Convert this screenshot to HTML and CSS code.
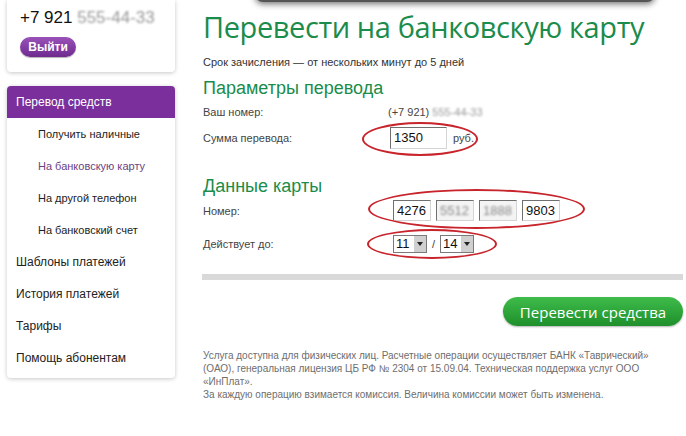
FILE: index.html
```html
<!DOCTYPE html>
<html lang="ru">
<head>
<meta charset="utf-8">
<title>Перевести на банковскую карту</title>
<link rel="stylesheet" href="styles.css">
</head>
<body>
<div class="topbar"></div>
<div class="page">
  <aside class="side">
    <div class="card user">
      <div class="phone">+7 921 <span class="blur">555-44-33</span></div>
      <button class="logout">Выйти</button>
    </div>
    <nav class="card menu">
      <div class="menu-head">Перевод средств</div>
      <a class="sub">Получить наличные</a>
      <a class="sub active">На банковскую карту</a>
      <a class="sub">На другой телефон</a>
      <a class="sub">На банковский счет</a>
      <a class="main-item">Шаблоны платежей</a>
      <a class="main-item">История платежей</a>
      <a class="main-item">Тарифы</a>
      <a class="main-item">Помощь абонентам</a>
    </nav>
  </aside>
  <main class="content">
    <h1 class="title">Перевести на банковскую карту</h1>
    <p class="lead">Срок зачисления — от нескольких минут до 5 дней</p>

    <h2 class="section">Параметры перевода</h2>
    <div class="row r-phone">
      <div class="label">Ваш номер:</div>
      <div class="value">(+7 921) <span class="blur">555-44-33</span></div>
    </div>
    <div class="row r-sum">
      <div class="label">Сумма перевода:</div>
      <div class="value field">
        <span class="ring ring-sum"></span>
        <span class="input w-sum">1350</span>
        <span class="unit">руб.</span>
      </div>
    </div>

    <h2 class="section s-card">Данные карты</h2>
    <div class="row r-card">
      <div class="label">Номер:</div>
      <div class="value field cards">
        <span class="ring ring-card"></span>
        <span class="input w-card">4276</span>
        <span class="input w-card masked"><span class="blur">5512</span></span>
        <span class="input w-card masked"><span class="blur">1888</span></span>
        <span class="input w-card">9803</span>
      </div>
    </div>
    <div class="row r-date">
      <div class="label">Действует до:</div>
      <div class="value field dates">
        <span class="ring ring-date"></span>
        <span class="select"><span class="sel-val">11</span><span class="arrow"></span></span>
        <span class="slash">/</span>
        <span class="select"><span class="sel-val">14</span><span class="arrow"></span></span>
      </div>
    </div>

    <div class="divider"></div>
    <div class="actions">
      <button class="submit">Перевести средства</button>
    </div>

    <div class="note">
      <p>Услуга доступна для физических лиц. Расчетные операции осуществляет БАНК «Таврический»<br>(ОАО), генеральная лицензия ЦБ РФ № 2304 от 15.09.04. Техническая поддержка услуг ООО<br>«ИнПлат».</p>
      <p>За каждую операцию взимается комиссия. Величина комиссии может быть изменена.</p>
    </div>
  </main>
</div>
</body>
</html>
```
FILE: styles.css
```css
* { box-sizing: border-box; }
html, body { margin: 0; padding: 0; background: #fff; }
body {
  font-family: "Liberation Sans", Arial, sans-serif;
  color: #333;
  width: 686px;
  height: 436px;
  overflow: hidden;
  position: relative;
}
.topbar {
  position: absolute;
  left: 255px;
  top: -30px;
  width: 400px;
  height: 32px;
  background: #555;
  border-radius: 0 0 8px 8px;
  box-shadow: 0 2px 6px rgba(0,0,0,0.55);
}
.page {
  display: flex;
  padding-left: 7px;
}
.side {
  width: 168px;
  flex: none;
  display: flex;
  flex-direction: column;
  gap: 14px;
}
.card {
  background: #fff;
  border-radius: 4px;
  box-shadow: 0 1px 4px rgba(0,0,0,0.22);
}
.user {
  height: 72px;
  padding: 9px 0 0 13px;
  border-radius: 0 0 4px 4px;
}
.phone {
  font-size: 17px;
  color: #111;
  line-height: 18px;
}
.blur {
  color: #999;
  filter: blur(1.2px);
}
.logout {
  margin-top: 10px;
  width: 56px;
  height: 20px;
  border: none;
  border-radius: 10px;
  background: linear-gradient(#9a52b8, #6e2b8e);
  color: #fff;
  font-family: "Liberation Sans", Arial, sans-serif;
  font-weight: bold;
  font-size: 12px;
  padding: 0;
  box-shadow: 0 1px 1px rgba(0,0,0,0.3);
}
.menu {
  display: flex;
  flex-direction: column;
  padding-bottom: 4px;
  height: 292px;
}
.menu-head {
  height: 32px;
  background: #7b2f9c;
  color: #fff;
  font-size: 12px;
  line-height: 32px;
  padding-left: 9px;
  border-radius: 4px 4px 0 0;
}
.menu a {
  display: block;
  height: 32.2px;
  line-height: 32px;
  color: #222;
}
.sub { font-size: 11px; padding-left: 31px; }
.sub.active { color: #6b3f82; }
.main-item { font-size: 12px; padding-left: 9px; }

.content {
  margin-left: 28px;
  width: 480px;
  flex: none;
}
.title {
  margin: 9px 0 0;
  font-family: "Open Sans", sans-serif;
  font-weight: normal;
  font-size: 29px;
  line-height: 36px;
  color: #1b8c4b;
  letter-spacing: -0.4px;
}
.lead {
  margin: 10px 0 0;
  font-size: 11px;
  line-height: 14px;
  color: #333;
}
.section {
  margin: 9px 0 0;
  font-weight: normal;
  font-size: 18px;
  line-height: 20px;
  color: #1b8c4b;
}
.s-card { margin-top: 27px; }
.row {
  display: grid;
  grid-template-columns: 185px auto;
  align-items: center;
  font-size: 11px;
  color: #444;
}
.r-phone { margin-top: 7px; height: 14px; }
.r-sum { margin-top: 8px; }
.r-card { margin-top: 4px; }
.r-date { margin-top: 14px; }
.field {
  position: relative;
  display: flex;
  align-items: center;
}
.ring {
  position: absolute;
  border: 2px solid #c8242c;
  border-radius: 50%;
}
.ring-sum { left: -26px; top: -5px; width: 116px; height: 34px; }
.ring-card { left: -20px; top: -11px; width: 217px; height: 40px; }
.ring-date { left: -21px; top: -6px; width: 130px; height: 30px; }
.input {
  display: inline-block;
  background: #fff;
  border-top: 1px solid #707070;
  border-left: 1px solid #707070;
  border-right: 1px solid #d4d4d4;
  border-bottom: 1px solid #d4d4d4;
  font-size: 13px;
  color: #111;
  line-height: 20px;
  padding-left: 3px;
}
.w-sum { width: 57px; height: 22px; margin-left: 2px; }
.unit { margin-left: 6px; font-size: 11px; color: #444; }
.cards { gap: 5px; padding-left: 5px; }
.w-card { width: 38px; height: 21px; line-height: 19px; }
.masked { background: #f4f4f4; }
.masked .blur { color: #888; }
.dates { padding-left: 5px; }
.select {
  display: inline-flex;
  width: 34px;
  height: 18px;
  border: 1px solid #7a7a7a;
  background: #fff;
  font-size: 13px;
  color: #111;
  line-height: 16px;
}
.sel-val { flex: 1; padding-left: 2px; }
.arrow {
  width: 13px;
  height: 16px;
  background: #d0d0d0;
  border-left: 1px solid #fff;
  position: relative;
}
.arrow::after {
  content: "";
  position: absolute;
  left: 3px;
  top: 6px;
  border-left: 3.5px solid transparent;
  border-right: 3.5px solid transparent;
  border-top: 4px solid #222;
}
.slash { margin: 0 5px 0 5px; font-size: 11px; color: #444; }
.divider {
  margin-top: 21px;
  margin-left: -1px;
  height: 6px;
  background: #d9d9d9;
}
.actions {
  display: flex;
  justify-content: flex-end;
  margin-top: 17px;
}
.submit {
  width: 180px;
  height: 29px;
  border: none;
  border-radius: 15px;
  background: linear-gradient(#3ebc4a, #1f8f2b);
  color: #fff;
  font-family: "Open Sans", sans-serif;
  font-size: 15px;
  padding: 0;
  box-shadow: 0 1px 2px rgba(0,0,0,0.3);
}
.note {
  margin-top: 23px;
  font-size: 10px;
  line-height: 13px;
  color: #6e6e6e;
}
.note p { margin: 0; }
```
